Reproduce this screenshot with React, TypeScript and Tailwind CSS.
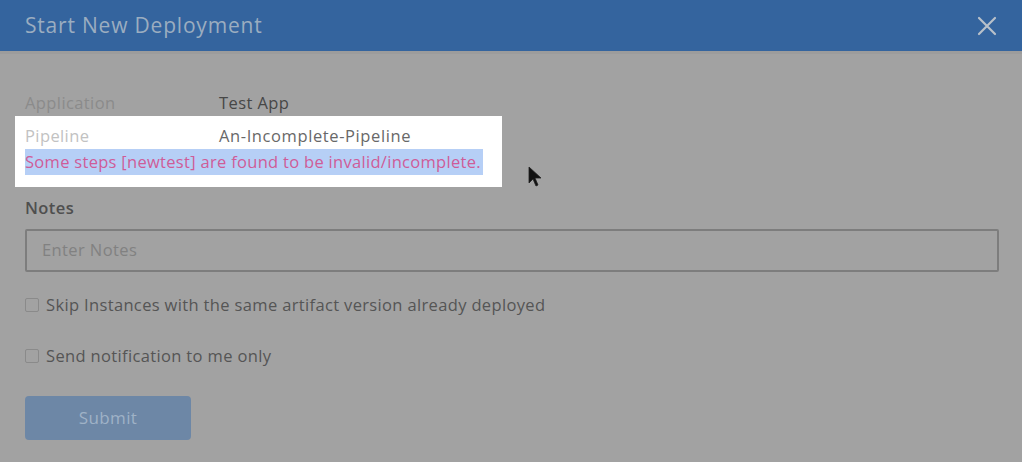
import React from "react";

export default function App() {
  return (
    <div
      className="relative w-[1022px] h-[462px] overflow-hidden bg-[#a2a2a2]"
      style={{ fontFamily: '"Open Sans", "Noto Sans", sans-serif' }}
    >
      <div className="h-[51px] bg-[#34649e] flex items-center justify-between pl-[25px] pr-[24px]">
        <span className="text-[21px] text-[#9badc0] tracking-[0.8px]">Start New Deployment</span>
        <svg width="20" height="20" viewBox="0 0 20 20" className="mr-[1px]">
          <path d="M2 2 L18 18 M18 2 L2 18" stroke="#b9c1ca" strokeWidth="2.2" strokeLinecap="round" />
        </svg>
      </div>
      <div className="h-[3px] bg-[#9c9c9c]" />
      <div className="px-[25px] pt-[36px] text-[16.5px] tracking-[0.4px]">
        <div className="flex h-[26px] items-center">
          <span className="w-[194px] text-[#8b8b8b]">Application</span>
          <span className="text-[#474747]">Test App</span>
        </div>
        <div className="-ml-[10px] w-[487px] h-[71px] bg-white pl-[10px] pt-[7px]">
          <div className="flex h-[26px] items-center">
            <span className="w-[194px] text-[#c2c2c2]">Pipeline</span>
            <span className="text-[#686868] tracking-[0.6px]">An-Incomplete-Pipeline</span>
          </div>
          <div className="h-[26px] w-[458px] bg-[#b6cff6] flex items-center text-[#cf5c98] whitespace-nowrap tracking-[0.3px]">
            Some steps [newtest] are found to be invalid/incomplete.
          </div>
        </div>
        <div className="mt-[10px] h-[22px] flex items-center font-semibold text-[#4f4f4f]">Notes</div>
        <div className="mt-[10px] h-[43px] w-[974px] border-2 border-[#7d7d7d] rounded-[2px] flex items-center pl-[15px] text-[#818181]">
          Enter Notes
        </div>
        <label className="mt-[23px] h-[20px] flex items-center gap-[7px] text-[#555555]">
          <span className="w-[14px] h-[14px] rounded-[2px] border border-[#8a8a8a]" />
          <span className="tracking-[0.35px]">Skip Instances with the same artifact version already deployed</span>
        </label>
        <label className="mt-[31px] h-[20px] flex items-center gap-[7px] text-[#555555]">
          <span className="w-[14px] h-[14px] rounded-[2px] border border-[#8a8a8a]" />
          <span className="tracking-[0.35px]">Send notification to me only</span>
        </label>
        <div className="mt-[30px] w-[166px] h-[44px] rounded-[4px] bg-[#6d87a6] flex items-center justify-center text-[17px] text-[#9fb2c6]">
          Submit
        </div>
      </div>
      <svg className="absolute left-[528px] top-[166px]" width="14" height="22" viewBox="0 0 14 22">
        <path d="M1 1 L1 17 L5 13 L8 20 L10 19 L7 12 L13 12 Z" fill="#111" stroke="#222" strokeWidth="0.8" />
      </svg>
    </div>
  );
}
